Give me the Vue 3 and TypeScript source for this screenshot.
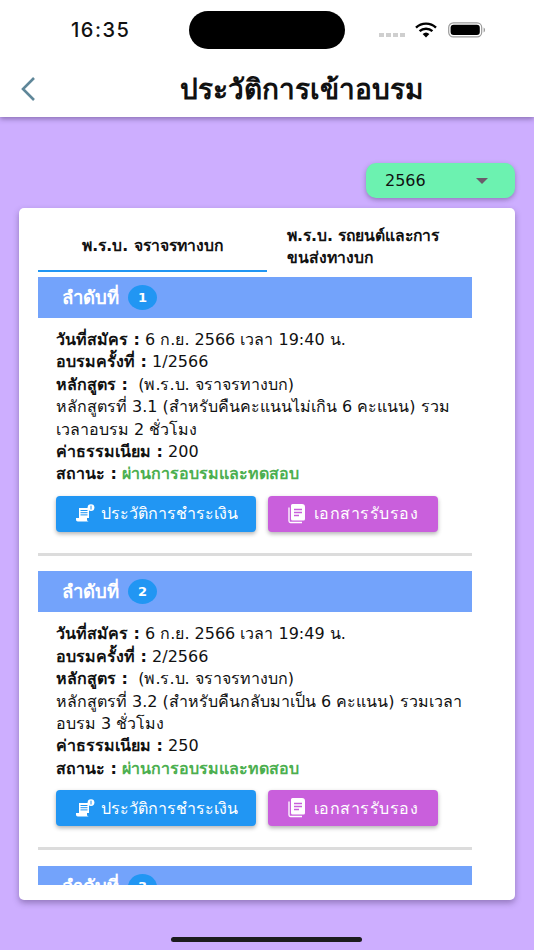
<script setup lang="ts">
interface Item {
  no: number
  date: string
  round: string
  course: string
  detail: string
  fee: string
}
const items: Item[] = [
  { no: 1, date: '6 ก.ย. 2566 เวลา 19:40 น.', round: '1/2566', course: '(พ.ร.บ. จราจรทางบก)', detail: 'หลักสูตรที่ 3.1 (สำหรับคืนคะแนนไม่เกิน 6 คะแนน) รวมเวลาอบรม 2 ชั่วโมง', fee: '200' },
  { no: 2, date: '6 ก.ย. 2566 เวลา 19:49 น.', round: '2/2566', course: '(พ.ร.บ. จราจรทางบก)', detail: 'หลักสูตรที่ 3.2 (สำหรับคืนกลับมาเป็น 6 คะแนน) รวมเวลาอบรม 3 ชั่วโมง', fee: '250' },
  { no: 3, date: '', round: '', course: '', detail: '', fee: '' }
]
</script>

<template>
  <div class="screen">
    <header class="top">
      <div class="status">
        <span class="time">16:35</span>
        <span class="island"></span>
        <span class="sys">
          <span class="dots"><i></i><i></i><i></i><i></i></span>
          <svg class="wifi" width="22" height="16" viewBox="0 0 22 16">
            <path d="M1 5.6a14.5 14.5 0 0 1 20 0" fill="none" stroke="#000" stroke-width="2.4" />
            <path d="M4.6 9.2a9.4 9.4 0 0 1 12.8 0" fill="none" stroke="#000" stroke-width="2.4" />
            <path d="M7.6 12a5 5 0 0 1 6.8 0L11 15.4z" fill="#000" />
          </svg>
          <svg class="battery" width="38" height="16" viewBox="0 0 38 16">
            <rect x="0.7" y="0.9" width="33" height="14" rx="4.6" fill="none" stroke="#9b9b9b" stroke-width="1.2" />
            <rect x="2.6" y="2.8" width="29.2" height="10.2" rx="3" fill="#000" />
            <path d="M35.6 5.6c1 .4 1.4 1.3 1.4 2.4s-.4 2-1.4 2.4z" fill="#9b9b9b" />
          </svg>
        </span>
      </div>
      <div class="nav">
        <svg class="back" width="16" height="26" viewBox="0 0 16 26">
          <path d="M14 2 3 13l11 11" fill="none" stroke="#5f8799" stroke-width="2.6" />
        </svg>
        <h1>ประวัติการเข้าอบรม</h1>
      </div>
    </header>

    <main class="body">
      <div class="select">
        <span>2566</span>
        <span class="caret"></span>
      </div>
      <section class="card">
        <div class="clip">
          <div class="tabs">
            <div class="tab active">พ.ร.บ. จราจรทางบก</div>
            <div class="tab">พ.ร.บ. รถยนต์และการขนส่งทางบก</div>
          </div>
          <article v-for="item in items" :key="item.no" class="item">
            <div class="band">
              <span>ลำดับที่</span>
              <span class="badge">{{ item.no }}</span>
            </div>
            <template v-if="item.date">
              <div class="info">
                <p><b>วันที่สมัคร :</b> {{ item.date }}</p>
                <p><b>อบรมครั้งที่ :</b> {{ item.round }}</p>
                <p><b>หลักสูตร :</b> &nbsp;{{ item.course }}</p>
                <p>{{ item.detail }}</p>
                <p><b>ค่าธรรมเนียม :</b> {{ item.fee }}</p>
                <p><b>สถานะ :</b> <b class="ok">ผ่านการอบรมและทดสอบ</b></p>
              </div>
              <div class="actions">
                <button class="btn pay">
                  <svg width="20" height="19" viewBox="0 0 20 19">
                    <path d="M4 4h10v10H4z" fill="#fff" />
                    <path d="M5.500 6.500h7M5.500 8.700h7M5.500 10.900h7" stroke="#2196f3" stroke-width="1" />
                    <path d="M1 14h11v1.500c0 1.100.8 2 1.800 2H2.800C1.800 17.500 1 16.600 1 15.500z" fill="#fff" />
                    <circle cx="16" cy="3.600" r="3.400" fill="#fff" />
                    <path d="M16 1.700v3.800" stroke="#2196f3" stroke-width="1" />
                  </svg>
                  <span>ประวัติการชำระเงิน</span>
                </button>
                <button class="btn doc">
                  <svg width="18" height="20" viewBox="0 0 18 20">
                    <path d="M3 1.500A1.500 1.500 0 0 1 4.500 0H14a3 3 0 0 1 3 3v12a1.500 1.500 0 0 1-1.500 1.500h-11A1.500 1.500 0 0 1 3 15z" fill="#fff" />
                    <path d="M1 3.500V17a1.500 1.500 0 0 0 1.500 1.500H14" fill="none" stroke="#fff" stroke-width="1.300" />
                    <path d="M6 5.500h8M6 8.500h8M6 11.500h5" stroke="#c95fdc" stroke-width="1.400" />
                  </svg>
                  <span>เอกสารรับรอง</span>
                </button>
              </div>
              <hr />
            </template>
          </article>
        </div>
      </section>
      <div class="home"></div>
    </main>
  </div>
</template>

<style scoped>
.screen {
  width: 534px;
  height: 950px;
  display: flex;
  flex-direction: column;
  background: #cdaeff;
  font-family: "DejaVu Sans", "Noto Sans", sans-serif;
  color: #111;
  overflow: hidden;
}
.top {
  height: 117px;
  flex: none;
  background: #fff;
  box-shadow: 0 2px 5px rgba(60, 40, 90, 0.45);
  position: relative;
  z-index: 1;
}
.status {
  height: 60px;
  display: flex;
  align-items: center;
  padding-left: 71px;
}
.time {
  width: 118px;
  font-family: Inter, sans-serif;
  font-size: 20px;
  font-weight: 500;
  letter-spacing: 1.500px;
}
.island {
  width: 156px;
  height: 38px;
  border-radius: 19px;
  background: #000;
}
.sys {
  display: flex;
  align-items: center;
  margin-left: 34px;
}
.dots {
  display: flex;
  gap: 2px;
  margin: 10px 10px 0 0;
}
.dots i {
  width: 5px;
  height: 4px;
  background: #cfcfcf;
}
.wifi {
  margin-right: 11px;
}
.nav {
  height: 57px;
  display: flex;
  align-items: center;
  justify-content: center;
  position: relative;
  padding-bottom: 1px;
}
.back {
  position: absolute;
  left: 20px;
  top: 16px;
}
h1 {
  margin: 0;
  font-size: 28px;
  font-weight: 700;
  color: #111;
  transform: translateX(34px);
}
.body {
  flex: 1;
  min-height: 0;
  display: flex;
  flex-direction: column;
  padding: 46px 19px 0;
}
.select {
  align-self: flex-end;
  width: 149px;
  height: 35px;
  box-sizing: border-box;
  padding: 0 27px 0 19px;
  display: flex;
  align-items: center;
  justify-content: space-between;
  background: #6cf2b0;
  border-radius: 10px;
  box-shadow: 0 2px 5px rgba(60, 40, 90, 0.4);
  font-size: 16px;
}
.caret {
  border-left: 6px solid transparent;
  border-right: 6px solid transparent;
  border-top: 6px solid #6b5b6b;
}
.card {
  margin-top: 10px;
  height: 692px;
  flex: none;
  box-sizing: border-box;
  padding: 0 43px 15px 19px;
  background: #fff;
  border-radius: 5px;
  box-shadow: 0 3px 6px rgba(60, 40, 90, 0.4);
}
.clip {
  height: 100%;
  overflow: hidden;
}
.tabs {
  display: flex;
  height: 64px;
  margin-bottom: 5px;
}
.tab {
  flex: 1;
  display: flex;
  align-items: center;
  box-sizing: border-box;
  padding: 14px 20px 0;
  font-size: 15.700px;
  font-weight: 700;
  line-height: 22px;
}
.tab.active {
  flex: 0 0 229px;
  justify-content: center;
  border-bottom: 2px solid #2196f3;
}
.band {
  height: 41px;
  box-sizing: border-box;
  padding-left: 24px;
  display: flex;
  align-items: center;
  gap: 9px;
  background: #73a3fb;
  color: #fff;
  font-size: 18.500px;
  font-weight: 700;
}
.badge {
  width: 29px;
  height: 25px;
  border-radius: 50%;
  background: #2196f3;
  display: flex;
  align-items: center;
  justify-content: center;
  font-size: 13px;
}
.info {
  padding: 11px 0 0 18px;
  font-size: 16px;
  line-height: 22.400px;
}
.info p {
  margin: 0;
}
.ok {
  color: #4caf50;
}
.actions {
  display: flex;
  gap: 12px;
  margin: 10px 0 0 18px;
}
.btn {
  height: 36px;
  border: 0;
  border-radius: 4px;
  color: #fff;
  font-family: inherit;
  font-size: 16px;
  display: flex;
  align-items: center;
  justify-content: center;
  gap: 6px;
  padding: 0;
  box-shadow: 0 2px 4px rgba(0, 0, 0, 0.3);
}
.pay {
  width: 200px;
  background: #2196f3;
}
.doc {
  width: 170px;
  gap: 8px;
  letter-spacing: 0.500px;
  background: #c95fdc;
}
hr {
  height: 3px;
  margin: 21px 0 15.500px;
  border: 0;
  background: #dcdcdc;
}
.home {
  width: 191px;
  height: 5px;
  margin: 37px auto 0;
  transform: translateX(-1px);
  border-radius: 3px;
  background: #1c1c1e;
}
</style>
